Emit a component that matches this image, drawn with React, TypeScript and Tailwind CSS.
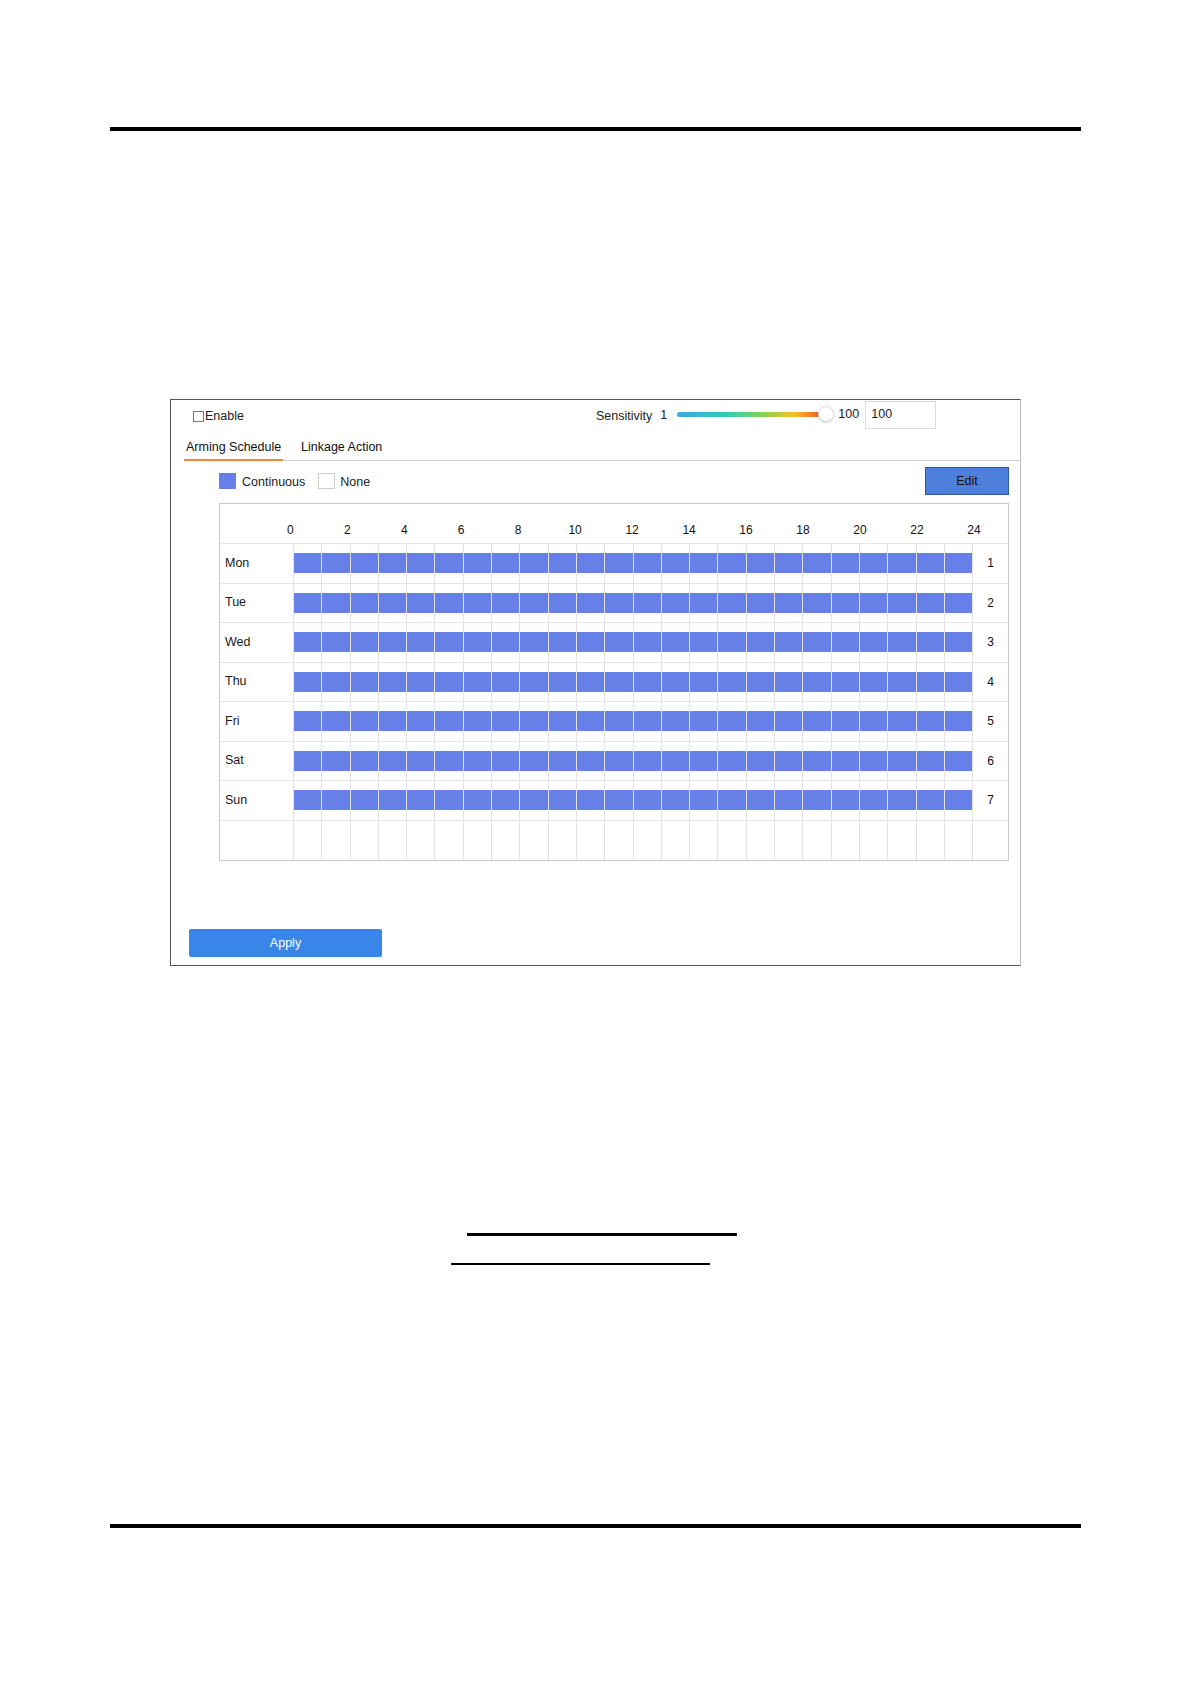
import React from 'react'

const days = ['Mon', 'Tue', 'Wed', 'Thu', 'Fri', 'Sat', 'Sun']
const hourLabels = [0, 2, 4, 6, 8, 10, 12, 14, 16, 18, 20, 22, 24]
const hours = Array.from({ length: 24 }, (_, i) => i)

function ScheduleRow({ label, index }: { label?: string; index?: number }) {
  const filled = label !== undefined
  return (
    <div className={`flex h-[39.5px] ${filled ? 'border-b border-[#e6e6e6]' : ''}`}>
      <div className="w-[73px] flex items-center pl-[5px] text-[12.5px] text-[#1a1a1a]">{label}</div>
      <div className="w-[679px] flex">
        {hours.map((h) => (
          <div key={h} className="flex-1 border-l border-[#e3e3e3] flex items-center">
            {filled && <div className="h-[20px] w-full bg-[#6680e8]" />}
          </div>
        ))}
      </div>
      <div className="w-[36px] border-l border-[#e3e3e3] flex items-center justify-center text-[12px] text-[#111]">
        {index}
      </div>
    </div>
  )
}

export default function App() {
  return (
    <div className="w-[1191px] h-[1684px] bg-white pt-[127px] font-['Liberation_Sans',Arial,sans-serif] text-[#222]">
      <div className="ml-[110px] w-[971px] h-[4px] bg-black" />

      {/* Motion detection panel */}
      <div className="mt-[268px] ml-[170px] w-[851px] h-[567px] border-t border-l border-b border-[#555] border-r-[#bdbdbd] border-r flex flex-col">
        <div className="h-[29px] flex items-center pl-[22px]">
          <div className="w-[403px] flex items-center">
            <span className="w-[11px] h-[11px] border border-[#777] bg-white mt-[4px]" />
            <span className="ml-[1px] text-[12.5px] leading-none mt-[4px]">Enable</span>
          </div>
          <span className="text-[12.5px] leading-none mt-[4px]">Sensitivity</span>
          <span className="text-[12.5px] leading-none mt-[2px] ml-[8px]">1</span>
          <div className="relative ml-[10px] w-[143px] h-[5px] rounded-full bg-[linear-gradient(to_right,#3ba8e6,#2cd0b4_35%,#8fd14f_62%,#f5c424_82%,#f2581f)]">
            <div className="absolute left-[141px] top-[-6px] w-[16px] h-[16px] rounded-full bg-white border border-[#dcdcdc] shadow-[0_1px_2px_rgba(0,0,0,0.15)]" />
          </div>
          <span className="ml-[18px] w-[20px] text-[12.5px] leading-none">100</span>
          <div className="ml-[7px] w-[71px] h-[28px] border border-[#dcdcdc] flex items-center pl-[5px] text-[12.5px]">
            100
          </div>
        </div>

        <div className="ml-[13px] h-[32px] border-b border-[#cfcfcf] flex items-end text-[12.5px] leading-[16px] text-[#111]">
          <div className="w-[99px] pl-[2px] pb-[4px] border-b-2 border-[#f0883a] -mb-px">Arming Schedule</div>
          <div className="ml-[18px] pb-[5px]">Linkage Action</div>
        </div>

        <div className="mt-[6px] h-[28px] flex items-center">
          <span className="ml-[48px] w-[17px] h-[16px] bg-[#6680e8]" />
          <span className="ml-[6px] mt-[2px] text-[12.5px]">Continuous</span>
          <span className="ml-[13px] w-[17px] h-[16px] border border-[#cccccc] bg-white" />
          <span className="ml-[5px] mt-[2px] text-[12.5px]">None</span>
          <button className="ml-auto mr-[11px] w-[84px] h-[28px] bg-[#4c80da] border border-[#2f5b9e] text-[12.5px] text-[#111]">
            Edit
          </button>
        </div>

        <div className="mt-[8px] ml-[48px] w-[790px] border border-[#c9c9c9]">
          <div className="h-[40px] border-b border-[#e6e6e6] flex items-end pb-[6px] pl-[41.8px]">
            {hourLabels.map((h) => (
              <span key={h} className="w-[56.97px] text-center text-[12px] leading-[14px] text-[#111]">
                {h}
              </span>
            ))}
          </div>
          {days.map((d, i) => (
            <ScheduleRow key={d} label={d} index={i + 1} />
          ))}
          <ScheduleRow />
        </div>

        <button className="mt-[68px] ml-[18px] w-[193px] h-[28px] rounded-[2px] bg-[#3a86e8] text-white text-[12.5px]">
          Apply
        </button>
      </div>

      <div className="mt-[267px] ml-[467px] w-[270px] h-[3px] bg-black" />
      <div className="mt-[27px] ml-[451px] w-[259px] h-[2px] bg-black" />
      <div className="mt-[259px] ml-[110px] w-[971px] h-[4px] bg-black" />
    </div>
  )
}
